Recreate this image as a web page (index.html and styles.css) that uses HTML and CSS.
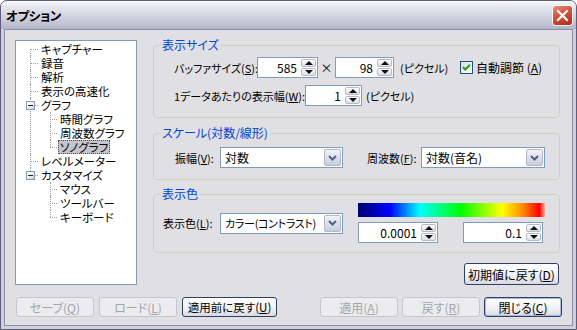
FILE: index.html
```html
<!DOCTYPE html>
<html lang="ja">
<head>
  <meta charset="UTF-8" />
  <title>オプション</title>
  <link rel="stylesheet" href="styles.css">
</head>
<body>
  <div class="window">
    <div class="titlebar">
      <span class="title">オプション</span>
      <span class="close-btn">
        <svg width="21" height="21" viewBox="0 0 21 21">
          <defs>
            <linearGradient id="closeGrad" x1="0" y1="0" x2="0.5" y2="1">
              <stop offset="0" stop-color="#eb9a88"/>
              <stop offset="0.45" stop-color="#d65a44"/>
              <stop offset="1" stop-color="#b73322"/>
            </linearGradient>
          </defs>
          <rect x="0.5" y="0.5" width="20" height="20" rx="3" fill="url(#closeGrad)" stroke="#ffffff"/>
          <path d="M6 6 L15 15 M15 6 L6 15" stroke="#ffffff" stroke-width="2.2" stroke-linecap="square"/>
        </svg>
      </span>
    </div>

    <div class="client">
      <div class="main">
        <div class="tree">
          <ul class="tree-root">
            <li><span class="node">キャプチャー</span></li>
            <li><span class="node">録音</span></li>
            <li><span class="node">解析</span></li>
            <li><span class="node">表示の高速化</span></li>
            <li><span class="toggle"></span><span class="node">グラフ</span>
              <ul>
                <li><span class="node">時間グラフ</span></li>
                <li><span class="node">周波数グラフ</span></li>
                <li><span class="node selected">ソノグラフ</span></li>
              </ul>
            </li>
            <li><span class="node">レベルメーター</span></li>
            <li><span class="toggle"></span><span class="node">カスタマイズ</span>
              <ul>
                <li><span class="node">マウス</span></li>
                <li><span class="node">ツールバー</span></li>
                <li><span class="node">キーボード</span></li>
              </ul>
            </li>
          </ul>
        </div>

        <div class="panels">
          <fieldset class="group group-size">
            <legend>表示サイズ</legend>
            <div class="row">
              <label class="lbl lbl-buffer">バッファサイズ(<u>S</u>):</label>
              <div class="spin spin-buf1">
                <input class="spin-value" type="text" value="585" />
                <div class="arrows"><span class="arrow up"></span><span class="arrow down"></span></div>
              </div>
              <span class="times">×</span>
              <div class="spin spin-buf2">
                <input class="spin-value" type="text" value="98" />
                <div class="arrows"><span class="arrow up"></span><span class="arrow down"></span></div>
              </div>
              <span class="unit unit-wide">(ピクセル)</span>
              <label class="check">
                <svg width="13" height="13" viewBox="0 0 13 13">
                  <defs>
                    <linearGradient id="chkGrad" x1="0" y1="0" x2="1" y2="1">
                      <stop offset="0" stop-color="#dcdcd7"/>
                      <stop offset="1" stop-color="#ffffff"/>
                    </linearGradient>
                  </defs>
                  <rect x="0.5" y="0.5" width="12" height="12" fill="url(#chkGrad)" stroke="#1c5180"/>
                  <path d="M3 6 L5.3 8.5 L10 3.8" fill="none" stroke="#21a121" stroke-width="2"/>
                </svg>
                <span>自動調節 (<u>A</u>)</span>
              </label>
            </div>
            <div class="row">
              <label class="lbl lbl-width">1データあたりの表示幅(<u>W</u>):</label>
              <div class="spin spin-width">
                <input class="spin-value" type="text" value="1" />
                <div class="arrows"><span class="arrow up"></span><span class="arrow down"></span></div>
              </div>
              <span class="unit">(ピクセル)</span>
            </div>
          </fieldset>

          <fieldset class="group group-scale">
            <legend>スケール(対数/線形)</legend>
            <div class="row">
              <label class="lbl lbl-amp">振幅(<u>V</u>):</label>
              <div class="combo combo-amp">
                <span class="combo-text">対数</span>
                <span class="combo-btn"><svg width="9" height="6" viewBox="0 0 9 6"><path d="M1 1 L4.5 4.5 L8 1" fill="none" stroke="#4d6185" stroke-width="2"/></svg></span>
              </div>
              <label class="lbl lbl-freq">周波数(<u>F</u>):</label>
              <div class="combo combo-freq">
                <span class="combo-text">対数(音名)</span>
                <span class="combo-btn"><svg width="9" height="6" viewBox="0 0 9 6"><path d="M1 1 L4.5 4.5 L8 1" fill="none" stroke="#4d6185" stroke-width="2"/></svg></span>
              </div>
            </div>
          </fieldset>

          <fieldset class="group group-color">
            <legend>表示色</legend>
            <div class="color-row">
              <label class="lbl lbl-color">表示色(<u>L</u>):</label>
              <div class="combo combo-color">
                <span class="combo-text combo-text-small">カラー(コントラスト)</span>
                <span class="combo-btn"><svg width="9" height="6" viewBox="0 0 9 6"><path d="M1 1 L4.5 4.5 L8 1" fill="none" stroke="#4d6185" stroke-width="2"/></svg></span>
              </div>
              <div class="color-col">
                <div class="color-bar"></div>
                <div class="range">
                  <div class="spin spin-range">
                    <input class="spin-value" type="text" value="0.0001" />
                    <div class="arrows"><span class="arrow up"></span><span class="arrow down"></span></div>
                  </div>
                  <div class="spin spin-range">
                    <input class="spin-value" type="text" value="0.1" />
                    <div class="arrows"><span class="arrow up"></span><span class="arrow down"></span></div>
                  </div>
                </div>
              </div>
            </div>
          </fieldset>

          <div class="reset-row">
            <button class="btn btn-reset">初期値に戻す(<u>D</u>)</button>
          </div>
        </div>
      </div>

      <div class="footer">
        <div class="footer-left">
          <button class="btn" disabled>セーブ(<u>Q</u>)</button>
          <button class="btn" disabled>ロード(<u>L</u>)</button>
          <button class="btn btn-wide">適用前に戻す(<u>U</u>)</button>
        </div>
        <div class="footer-right">
          <button class="btn" disabled>適用(<u>A</u>)</button>
          <button class="btn" disabled>戻す(<u>R</u>)</button>
          <button class="btn btn-default">閉じる(<u>C</u>)</button>
        </div>
      </div>
    </div>
  </div>
</body>
</html>
```

FILE: styles.css
```css
* {
  box-sizing: border-box;
}
body {
  margin: 0;
  font-family: "Noto Sans CJK JP", "Noto Sans", sans-serif;
  font-size: 11px;
  color: #000;
  font-feature-settings: "palt";
}
u {
  text-decoration: underline;
  text-underline-offset: 1px;
}

/* window frame */
.window {
  width: 577px;
  height: 330px;
  display: flex;
  flex-direction: column;
  background: #cfcfdc;
  border: 1px solid #5c5c7c;
  border-radius: 7px 7px 0 0;
  overflow: hidden;
}
.titlebar {
  height: 28px;
  flex: none;
  display: flex;
  align-items: center;
  justify-content: space-between;
  padding: 1px 3px 0 5px;
  background: linear-gradient(#fbfbfd 0%, #eaeaf1 15%, #d9d9e4 45%, #c6c6d6 75%, #b4b4c8 100%);
}
.title {
  font-weight: bold;
  font-size: 12.5px;
  letter-spacing: -0.3px;
}
.close-btn {
  display: flex;
  width: 21px;
  height: 21px;
}
.client {
  flex: 1;
  margin: 0 3px 3px;
  padding: 10px 10px 0 10px;
  background: #e0dfe3;
  border: 1px solid #8e8ea8;
}
.main {
  display: flex;
  align-items: flex-start;
}

/* tree */
.tree {
  width: 122px;
  height: 245px;
  padding-top: 1px;
  background: #fff;
  border: 1px solid #7f9db9;
}
.tree ul {
  list-style: none;
  margin: 0;
  padding: 0;
}
.tree-root {
  margin-left: 14px !important;
}
.tree li {
  position: relative;
  padding-left: 9px;
  line-height: 14px;
}
.tree li ul {
  margin-left: 11px;
}
.tree li ul li {
  padding-left: 8px;
}
.tree li::before {
  content: "";
  position: absolute;
  left: 0;
  top: 7px;
  width: 8px;
  border-top: 1px dotted #a0a0a0;
}
.tree li ul li::before {
  width: 7px;
}
.tree li::after {
  content: "";
  position: absolute;
  left: 0;
  top: 0;
  bottom: 0;
  border-left: 1px dotted #a0a0a0;
}
.tree-root > li:first-child::after {
  top: 7px;
}
.tree li:last-child::after {
  bottom: auto;
  height: 7px;
}
.node {
  display: inline-block;
  padding: 0 2px;
  height: 14px;
  line-height: 14px;
  white-space: nowrap;
  font-size: 11.5px;
}
.node.selected {
  background: #c4c4cc;
  outline: 1px dotted #505050;
  outline-offset: -1px;
}
.toggle {
  position: absolute;
  left: -4px;
  top: 3px;
  width: 9px;
  height: 9px;
  z-index: 1;
  border: 1px solid #8a99b0;
  background: linear-gradient(135deg, #ffffff 30%, #c8c8d0);
}
.toggle::after {
  content: "";
  position: absolute;
  left: 1px;
  top: 3px;
  width: 5px;
  border-top: 1px solid #202020;
}

/* group boxes */
.panels {
  width: 407px;
  margin-left: 16px;
  margin-top: -2px;
}
.group {
  margin: 0;
  min-width: 0;
  padding-left: 0;
  padding-right: 0;
  border: 1px solid #d0d0bf;
  border-radius: 4px;
}
.group legend {
  margin-left: 6px;
  padding: 0 2px;
  line-height: 14px;
  font-size: 12px;
  color: #0046d5;
}
.group-size {
  padding-top: 5px;
  padding-bottom: 11px;
}
.group-size .row {
  padding-left: 20px;
}
.group-scale {
  margin-top: 8px;
  padding-top: 7px;
  padding-bottom: 11px;
}
.group-scale .row {
  padding-left: 21px;
}
.group-color {
  margin-top: 7px;
  padding-top: 2px;
  padding-bottom: 9px;
}
.group-color .color-row {
  padding-left: 9px;
}
.row {
  display: flex;
  align-items: center;
  height: 21px;
  white-space: nowrap;
}
.row + .row {
  margin-top: 7px;
}
.lbl {
  flex: none;
  white-space: nowrap;
}
.lbl-buffer { width: 83px; }
.lbl-width { width: 131px; }
.lbl-amp { width: 45px; }
.lbl-freq { width: 54px; margin-left: 24px; }
.lbl-color { width: 57px; }
.times {
  width: 17px;
  text-align: center;
  font-size: 12px;
}
.unit {
  margin-left: 4px;
}
.unit-wide {
  margin-left: 6px;
  width: 60px;
}
.check {
  display: flex;
  align-items: center;
  gap: 3px;
  font-size: 12px;
}

/* spin boxes */
.spin {
  display: flex;
  height: 21px;
  background: #fff;
  border: 1px solid #7f9db9;
}
.spin-value {
  flex: 1;
  min-width: 0;
  border: 0;
  padding: 0 4px 0 0;
  font: inherit;
  font-size: 12px;
  text-align: right;
  background: transparent;
  outline: none;
}
.arrows {
  width: 16px;
  display: flex;
  flex-direction: column;
  padding: 1px 1px 1px 0;
  gap: 1px;
}
.arrow {
  flex: 1;
  display: flex;
  align-items: center;
  justify-content: center;
  border: 1px solid #b6b9c8;
  border-radius: 2px;
  background: linear-gradient(#ffffff, #dcdde6);
}
.arrow::after {
  content: "";
  border-left: 4px solid transparent;
  border-right: 4px solid transparent;
}
.arrow.up::after {
  border-bottom: 4px solid #111;
}
.arrow.down::after {
  border-top: 4px solid #111;
}
.spin-buf1 { width: 61px; }
.spin-buf2 { width: 59px; }
.spin-width { width: 57px; }
.spin-range { width: 80px; }

/* combo boxes */
.combo {
  display: flex;
  align-items: center;
  height: 21px;
  background: #fff;
  border: 1px solid #7f9db9;
  padding: 1px;
}
.combo-text {
  flex: 1;
  min-width: 0;
  padding-left: 3px;
  white-space: nowrap;
  font-size: 12px;
}
.combo-text-small {
  font-size: 11px;
  letter-spacing: -0.3px;
}
.combo-btn {
  flex: none;
  width: 17px;
  height: 17px;
  display: flex;
  align-items: center;
  justify-content: center;
  border: 1px solid #b2b8cc;
  border-radius: 2px;
  background: linear-gradient(#f2f3f8, #c9cddd);
}
.combo-amp { width: 123px; }
.combo-freq { width: 124px; }
.combo-color { width: 123px; }

/* colour scale */
.color-row {
  display: flex;
  align-items: center;
}
.color-col {
  width: 187px;
  margin-left: 15px;
}
.color-bar {
  height: 14px;
  background: linear-gradient(to right, #000070 0%, #0000ff 17%, #00ffff 33%, #00ff00 55%, #ffff00 77%, #ff8c00 88%, #ff0000 97%, #ffb0a0 100%);
}
.range {
  display: flex;
  gap: 25px;
  margin-top: 5px;
}

/* buttons */
.btn {
  height: 20px;
  width: 78px;
  padding: 0;
  font: inherit;
  font-size: 12px;
  color: #000;
  border: 1px solid #2e3f6a;
  border-radius: 3px;
  background: linear-gradient(#ffffff, #f1f1f4 60%, #d8d8e2);
  white-space: nowrap;
}
.btn:disabled {
  color: #a4a4ac;
  border-color: #c6c6cf;
  background: #ececee;
}
.btn-wide {
  width: 95px;
  font-size: 11.5px;
}
.btn-default {
  box-shadow: inset 0 0 0 1px #a9b9d8;
}
.reset-row {
  display: flex;
  justify-content: flex-end;
  margin-top: 10px;
  padding-right: 1px;
}
.btn-reset {
  width: 95px;
  height: 22px;
}
.footer {
  display: flex;
  justify-content: space-between;
  margin-top: 12px;
  padding-left: 1px;
}
.footer-left,
.footer-right {
  display: flex;
}
.footer-left .btn + .btn {
  margin-left: 5px;
}
.footer-left .btn-wide {
  margin-left: 12px;
}
.footer-right .btn + .btn {
  margin-left: 4px;
}
.footer-right .btn-default {
  margin-left: 11px;
}
```
